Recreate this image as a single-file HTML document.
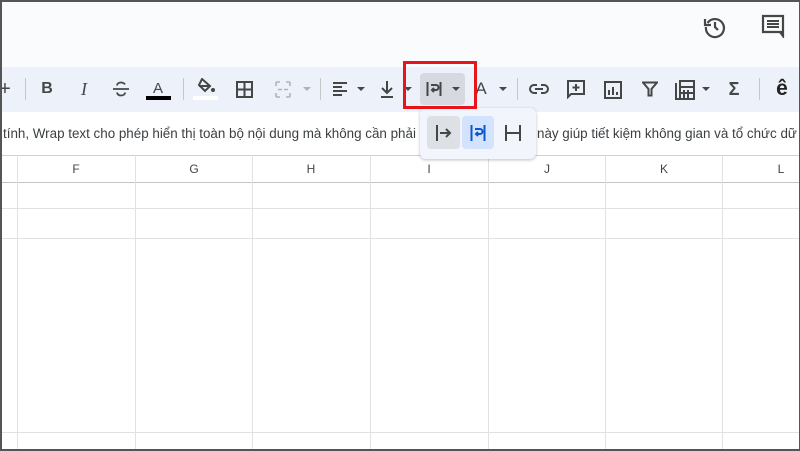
<!DOCTYPE html>
<html><head><meta charset="utf-8"><style>
*{margin:0;padding:0;box-sizing:border-box}
html,body{width:800px;height:451px;overflow:hidden}
body{background:#fff;font-family:"Liberation Sans",sans-serif;position:relative}
.frame{position:absolute;left:0;top:0;width:800px;height:451px;border:2px solid #555;border-right-width:1px;border-bottom-width:2px;z-index:50;pointer-events:none}
.top{position:absolute;left:0;top:0;width:800px;height:67px;background:#f9fbfd}
.tb{position:absolute;left:0;top:67px;width:800px;height:45px;background:#edf2fa}
.ic{position:absolute;top:78px;height:22px;color:#444746;font-size:16px;line-height:22px;text-align:center;transform:translateX(-50%)}
.sep{position:absolute;top:78px;width:1px;height:22px;background:#c7c7c7}
.car{position:absolute;top:87px;width:0;height:0;border-left:4px solid transparent;border-right:4px solid transparent;border-top:4px solid #444746;transform:translateX(-50%)}
.fx{position:absolute;left:0;top:112px;width:800px;height:43px;background:#fff;font-size:13.4px;color:#3c4043;line-height:43px;white-space:nowrap;overflow:hidden}
.fx span{position:absolute;top:0}
.hdr{position:absolute;left:0;top:155px;width:800px;height:28px;border-top:1px solid #d0d0d0;border-bottom:1px solid #c4c4c4;background:#fff}
.col{position:absolute;top:155px;width:118px;height:28px;font-size:12px;color:#444;text-align:center;line-height:28px}
.vl{position:absolute;top:155px;width:1px;height:296px;background:#e1e1e1}
.hl{position:absolute;left:0;width:800px;height:1px;background:#e1e1e1}
.red{position:absolute;left:403px;top:61px;width:74px;height:48px;border:3px solid #e8141b;z-index:20}
.pop{position:absolute;left:420px;top:108px;width:116px;height:51px;background:#f2f5fb;border-radius:6px;box-shadow:0 1px 3px rgba(0,0,0,.25);z-index:15}
</style></head><body>
<div class="top"></div>
<svg style="position:absolute;left:703px;top:15px" width="24" height="24" viewBox="0 0 24 24"><path d="M4.5 8A9 9 0 1 1 3 12" fill="none" stroke="#444746" stroke-width="2.2"/><path d="M2 4v6h6" fill="none" stroke="#444746" stroke-width="2.2"/><path d="M12 7v5l3 3" fill="none" stroke="#444746" stroke-width="2.2"/></svg>
<svg style="position:absolute;left:761px;top:14px" width="24" height="24" viewBox="0 0 24 24"><path d="M2 2h20v16H5l-3 0z M19 18l3 4v-4" fill="none" stroke="#444746" stroke-width="2.2"/><path d="M6 7h12M6 10h12M6 13h12" stroke="#444746" stroke-width="2"/></svg>
<div class="tb"></div>
<div class="ic" style="left:5px;font-size:20px">+</div>
<div class="sep" style="left:25px"></div>
<div class="ic" style="left:47px;font-weight:bold">B</div>
<div class="ic" style="left:84px;font-style:italic;font-family:'Liberation Serif';font-size:18px">I</div>
<svg style="position:absolute;left:112px;top:80px" width="18" height="18" viewBox="0 0 18 18"><path d="M1 9h16M13 4.5C12 3 10.5 2.5 9 2.5 6.5 2.5 5 4 5 5.5M5 12.5c0.5 2 2 3 4 3s4-1 4-3" fill="none" stroke="#444746" stroke-width="1.8"/></svg>
<div class="ic" style="left:158px;font-size:15px">A</div>
<div style="position:absolute;left:146px;top:96px;width:25px;height:4px;background:#000"></div>
<div class="sep" style="left:183px"></div>
<svg style="position:absolute;left:196px;top:78px" width="20" height="16" viewBox="0 0 20 16"><path d="M6 1l8 7-5 5-6-6z" fill="none" stroke="#444746" stroke-width="2"/><path d="M3 8h11" stroke="#444746" stroke-width="2"/><circle cx="17" cy="12" r="2" fill="#444746"/></svg>
<div style="position:absolute;left:193px;top:96px;width:25px;height:4px;background:#fff"></div>
<svg style="position:absolute;left:236px;top:81px" width="17" height="17" viewBox="0 0 17 17"><path d="M1 1h15v15H1zM8.5 1v15M1 8.5h15" fill="none" stroke="#444746" stroke-width="2"/></svg>
<svg style="position:absolute;left:275px;top:81px" width="16" height="17" viewBox="0 0 16 17"><path d="M1 1h4M1 1v4M15 1h-4M15 1v4M1 16h4M1 16v-4M15 16h-4M15 16v-4M3 8.5h4M9 8.5h4" fill="none" stroke="#b0b3b8" stroke-width="1.6"/></svg>
<div class="car" style="left:307px;border-top-color:#b0b3b8"></div>
<div class="sep" style="left:320px"></div>
<svg style="position:absolute;left:332px;top:81px" width="16" height="16" viewBox="0 0 16 16"><path d="M1 2h14M1 6h9M1 10h14M1 14h9" stroke="#444746" stroke-width="2"/></svg>
<div class="car" style="left:361px"></div>
<svg style="position:absolute;left:380px;top:80px" width="14" height="18" viewBox="0 0 14 18"><path d="M7 1v11M2 8l5 5 5-5M1 17h12" fill="none" stroke="#444746" stroke-width="2"/></svg>
<div class="car" style="left:408px"></div>
<div style="position:absolute;left:420px;top:73px;width:45px;height:32px;background:#d6dae0;border-radius:4px"></div>
<svg style="position:absolute;left:426px;top:81px" width="16" height="16" viewBox="0 0 16 16"><path d="M1.5 1v14M14.5 1v14M5 4h5a2.5 2.5 0 0 1 0 5H6M8 7l-2 2 2 2" fill="none" stroke="#444746" stroke-width="2"/></svg>
<div class="car" style="left:456px"></div>
<div class="ic" style="left:481px;font-size:17px">A</div>
<div class="car" style="left:503px"></div>
<div class="sep" style="left:517px"></div>
<svg style="position:absolute;left:529px;top:82px" width="20" height="14" viewBox="0 0 20 14"><path d="M8 3H5a4 4 0 0 0 0 8h3M12 3h3a4 4 0 0 1 0 8h-3M6 7h8" fill="none" stroke="#444746" stroke-width="2"/></svg>
<svg style="position:absolute;left:566px;top:79px" width="20" height="20" viewBox="0 0 20 20"><path d="M2 2h16v13H5l-3 3z M10 5v7M6.5 8.5h7" fill="none" stroke="#444746" stroke-width="2"/></svg>
<svg style="position:absolute;left:604px;top:81px" width="18" height="18" viewBox="0 0 18 18"><path d="M1 1h16v16H1zM5 9v5M9 6v8M13 11v3" fill="none" stroke="#444746" stroke-width="2"/></svg>
<svg style="position:absolute;left:642px;top:81px" width="16" height="16" viewBox="0 0 16 16"><path d="M1 1.5h14L9.5 8v6.5h-3V8z" fill="none" stroke="#444746" stroke-width="2"/></svg>
<svg style="position:absolute;left:675px;top:80px" width="20" height="20" viewBox="0 0 20 20"><path d="M1 3v16h15M5 1h14v18H5zM5 7h14M9 10v9M13 10v9M5 13h14" fill="none" stroke="#444746" stroke-width="2"/></svg>
<div class="car" style="left:706px"></div>
<div class="ic" style="left:734px;font-weight:bold;font-size:18px">Σ</div>
<div class="sep" style="left:759px"></div>
<div class="ic" style="left:782px;font-weight:bold;font-size:21px;color:#222">ê</div>
<div class="fx"><span style="left:3px">tính, Wrap text cho phép hiển thị toàn bộ nội dung mà không cần phải</span><span style="left:537px">này giúp tiết kiệm không gian và tổ chức dữ liệu</span></div>
<div class="hdr"></div>
<div class="vl" style="left:17px"></div><div class="vl" style="left:135px"></div><div class="vl" style="left:252px"></div><div class="vl" style="left:370px"></div><div class="vl" style="left:488px"></div><div class="vl" style="left:605px"></div><div class="vl" style="left:722px"></div>
<div class="hl" style="top:208px"></div><div class="hl" style="top:238px"></div><div class="hl" style="top:432px"></div>
<div class="col" style="left:17px">F</div><div class="col" style="left:135px">G</div><div class="col" style="left:252px">H</div><div class="col" style="left:370px">I</div><div class="col" style="left:488px">J</div><div class="col" style="left:605px">K</div><div class="col" style="left:722px">L</div>
<div class="red"></div>
<div class="pop">
<div style="position:absolute;left:7px;top:8px;width:33px;height:33px;background:#dde1e6;border-radius:4px"></div>
<div style="position:absolute;left:42px;top:8px;width:32px;height:33px;background:#d3e3fd;border-radius:4px"></div>
<svg style="position:absolute;left:15px;top:17px" width="18" height="16" viewBox="0 0 18 16"><path d="M2 0v16M5 8h10M11 4l4 4-4 4" fill="none" stroke="#444746" stroke-width="2"/></svg>
<svg style="position:absolute;left:50px;top:17px" width="16" height="16" viewBox="0 0 16 16"><path d="M1.5 0v16M14.5 0v16M5 4h5a2.5 2.5 0 0 1 0 5H6M8 7l-2 2 2 2" fill="none" stroke="#0b57d0" stroke-width="2"/></svg>
<svg style="position:absolute;left:84px;top:17px" width="18" height="16" viewBox="0 0 18 16"><path d="M2 0v16M16 0v16M2 8h14" fill="none" stroke="#444746" stroke-width="2"/></svg>
</div>
<div class="frame"></div>
</body></html>
